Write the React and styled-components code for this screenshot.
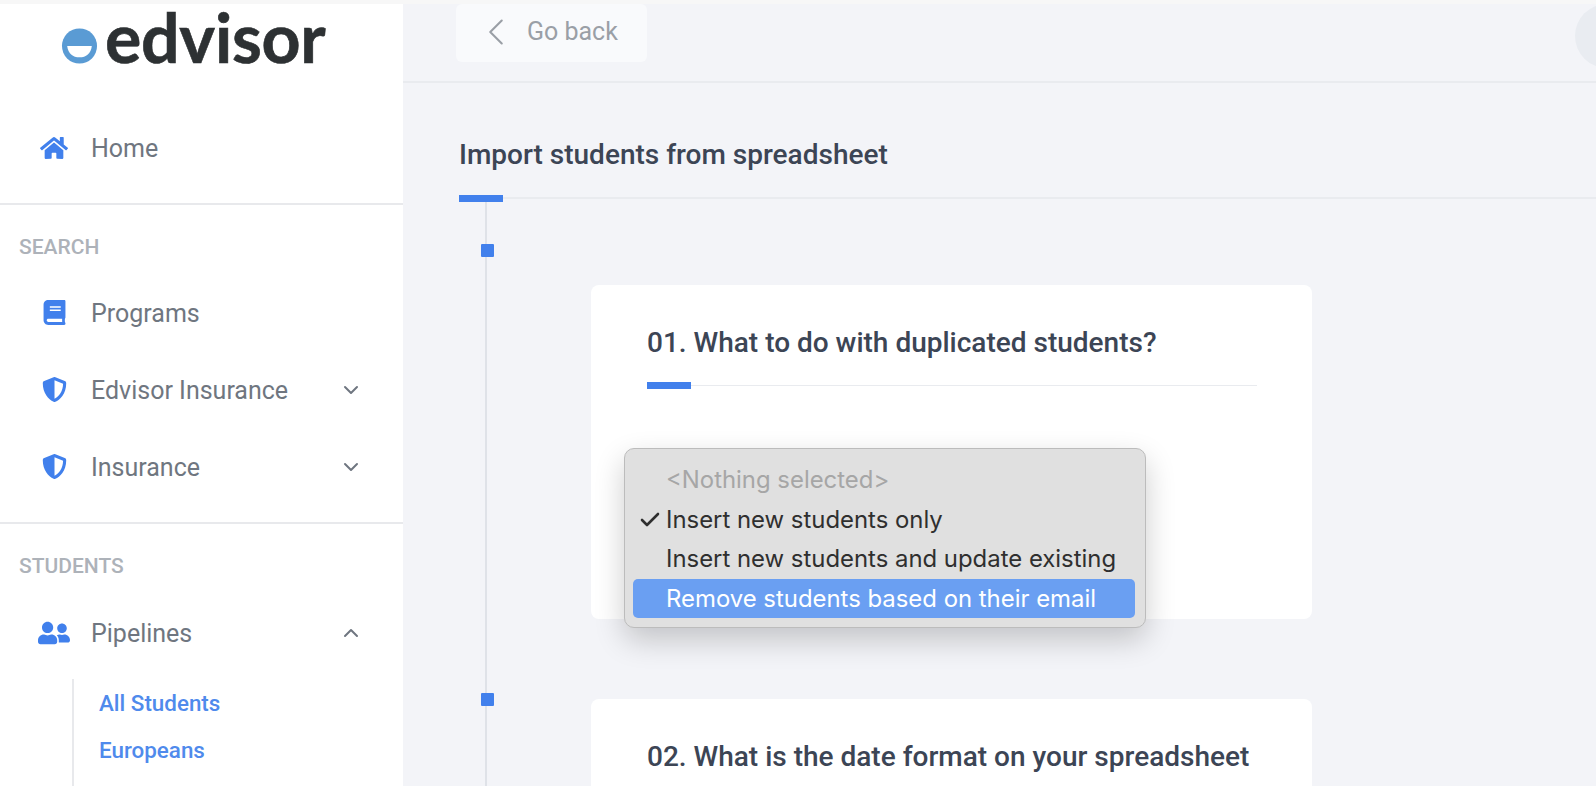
import { createGlobalStyle, styled } from 'styled-components';
import { FaHome, FaBook, FaShieldAlt, FaUserFriends } from 'react-icons/fa';
import { ChevronDown, ChevronUp, ChevronLeft, Check } from 'lucide-react';

const GlobalStyle = createGlobalStyle`
  html, body {
    margin: 0;
    padding: 0;
    overflow: hidden;
    background: #f3f4f8;
    font-family: Roboto, "Liberation Sans", sans-serif;
  }
  * { box-sizing: border-box; }
`;

const Page = styled.div`
  height: 786px;
  overflow: hidden;
  display: flex;
  flex-direction: column;
`;

const TopStrip = styled.div`
  height: 4px;
  flex: none;
  background: #f7f7f7;
`;

const Body = styled.div`
  flex: 1;
  min-height: 0;
  display: flex;
`;

const Sidebar = styled.aside`
  width: 403px;
  flex: none;
  background: #fff;
`;

const LogoBar = styled.div`
  height: 78px;
  padding: 2px 0 0 61px;
  display: flex;
  align-items: flex-start;
  gap: 7px;
`;

const LogoText = styled.span`
  font-family: Lato, sans-serif;
  font-weight: 700;
  font-size: 68px;
  line-height: 62px;
  letter-spacing: -0.3px;
  color: #2d3133;
  -webkit-text-stroke: 0.6px #2d3133;
`;

const LogoMark = styled.svg`
  width: 37px;
  height: 36px;
  flex: none;
  margin-top: 22px;
`;

const NavSection = styled.section`
  padding: ${(p) => p.$top}px 0 ${(p) => p.$bottom}px;
  border-bottom: ${(p) => (p.$plain ? 'none' : '2px solid #e8e9ec')};
`;

const SectionLabel = styled.div`
  height: 22px;
  margin: 0 0 ${(p) => p.$gap}px 19px;
  font-size: 21px;
  line-height: 22px;
  font-weight: 500;
  color: #adb2b9;
`;

const NavRow = styled.div`
  height: 77px;
  display: flex;
  align-items: center;
  padding: 0 40px 0 38px;
  font-size: 25px;
  color: #6f7680;
`;

const NavIcon = styled.span`
  width: 32px;
  margin-right: 21px;
  flex: none;
  display: flex;
  justify-content: center;
  color: #4180ec;
`;

const NavText = styled.span`
  flex: 1;
  padding-top: 2px;
`;

const SubNav = styled.div`
  margin: 8px 0 0 72px;
  padding-left: 25px;
  border-left: 2px solid #e8e9ec;
  height: 120px;
`;

const SubItem = styled.div`
  height: 47px;
  display: flex;
  align-items: center;
  font-size: 22.4px;
  font-weight: 500;
  color: #4f8aec;
`;

const Main = styled.main`
  flex: 1;
  min-width: 0;
  overflow: hidden;
`;

const Header = styled.header`
  height: 79px;
  padding-left: 53px;
  display: flex;
  justify-content: space-between;
  border-bottom: 2px solid #e9ebef;
`;

const BackButton = styled.div`
  width: 191px;
  height: 58px;
  padding-left: 17px;
  display: flex;
  align-items: center;
  gap: 8px;
  padding-bottom: 3px;
  background: #f9fafc;
  border-radius: 6px;
  font-size: 25px;
  color: #9a9fa6;
`;

const Avatar = styled.div`
  width: 64px;
  height: 64px;
  flex: none;
  margin-right: -43px;
  border-radius: 50%;
  background: #e9ecf1;
`;

const Content = styled.div`
  padding-left: 56px;
`;

const Heading = styled.div`
  position: relative;
  height: 116px;
  padding-top: 54px;
  font-size: 28px;
  line-height: 36px;
  font-weight: 500;
  color: #3c4555;
  border-bottom: 2px solid #e9ebef;
`;

const Accent = styled.span`
  position: absolute;
  left: 0;
  bottom: ${(p) => p.$bottom}px;
  width: 44px;
  height: 7px;
  background: #4180ec;
`;

const Timeline = styled.div`
  margin-left: 26px;
  padding-left: 104px;
  border-left: 2px solid #dfe2e8;
  height: 600px;
`;

const Step = styled.div`
  position: relative;
  padding-top: ${(p) => p.$top}px;
`;

const Marker = styled.span`
  position: absolute;
  left: -110px;
  top: ${(p) => p.$top}px;
  width: 13px;
  height: 13px;
  background: #4180ec;
  border-radius: 1px;
`;

const Card = styled.div`
  position: relative;
  width: 721px;
  height: ${(p) => p.$height}px;
  padding: 0 55px 0 56px;
  background: #fff;
  border-radius: 8px;
`;

const CardTitle = styled.div`
  position: relative;
  height: 101px;
  padding-top: 39px;
  font-size: 28px;
  line-height: 38px;
  font-weight: 500;
  color: #3c4555;
  border-bottom: 1px solid #e9ebef;
`;

const Menu = styled.div`
  position: absolute;
  left: 33px;
  top: 163px;
  width: 522px;
  height: 180px;
  padding: 11px 10px 11px 8px;
  background: #e0e0e0;
  border: 1px solid #bcbcbc;
  border-radius: 10px;
  box-shadow: 0 12px 30px rgba(0, 0, 0, 0.2);
  font-family: Inter, sans-serif;
  font-size: 23.9px;
`;

const MenuItem = styled.div`
  position: relative;
  height: 39.6px;
  padding-left: 33px;
  display: flex;
  align-items: center;
  border-radius: 5px;
  color: ${(p) => (p.$disabled ? '#a6a6a6' : p.$active ? '#fff' : '#2f2f2f')};
  background: ${(p) => (p.$active ? '#6a9ff2' : 'transparent')};
`;

const Tick = styled.span`
  position: absolute;
  left: 5px;
  top: 8px;
  display: flex;
`;

const NavEntry = ({ icon, label, chevron }) => (
  <NavRow>
    <NavIcon>{icon}</NavIcon>
    <NavText>{label}</NavText>
    {chevron}
  </NavRow>
);

const App = () => {
  return (
    <>
      <GlobalStyle />
      <Page>
        <TopStrip />
        <Body>
          <Sidebar>
            <LogoBar>
              <LogoMark viewBox="0 0 38 38">
                <circle cx="19" cy="19" r="18.5" fill="#5a9bd4" />
                <path d="M6 19 H32 C31 27 26 31 19 31 C12 31 7 27 6 19 Z" fill="#fff" />
              </LogoMark>
              <LogoText>edvisor</LogoText>
            </LogoBar>

            <NavSection $top={27} $bottom={17}>
              <NavEntry icon={<FaHome size={28} />} label="Home" />
            </NavSection>

            <NavSection $top={31} $bottom={17}>
              <SectionLabel $gap={16}>SEARCH</SectionLabel>
              <NavEntry icon={<FaBook size={25} />} label="Programs" />
              <NavEntry
                icon={<FaShieldAlt size={25} />}
                label="Edvisor Insurance"
                chevron={<ChevronDown size={24} strokeWidth={2} color="#6f7680" />}
              />
              <NavEntry
                icon={<FaShieldAlt size={25} />}
                label="Insurance"
                chevron={<ChevronDown size={24} strokeWidth={2} color="#6f7680" />}
              />
            </NavSection>

            <NavSection $top={31} $bottom={0} $plain>
              <SectionLabel $gap={17}>STUDENTS</SectionLabel>
              <NavEntry
                icon={<FaUserFriends size={32} />}
                label="Pipelines"
                chevron={<ChevronUp size={24} strokeWidth={2} color="#6f7680" />}
              />
              <SubNav>
                <SubItem>All Students</SubItem>
                <SubItem>Europeans</SubItem>
              </SubNav>
            </NavSection>
          </Sidebar>

          <Main>
            <Header>
              <BackButton>
                <ChevronLeft size={46} strokeWidth={1.1} />
                Go back
              </BackButton>
              <Avatar />
            </Header>
            <Content>
              <Heading>
                Import students from spreadsheet
                <Accent $bottom={-5} />
              </Heading>
              <Timeline>
                <Step $top={86}>
                  <Marker $top={45} />
                  <Card $height={334}>
                    <CardTitle>
                      01. What to do with duplicated students?
                      <Accent $bottom={-4} />
                    </CardTitle>
                    <Menu>
                      <MenuItem $disabled>&lt;Nothing selected&gt;</MenuItem>
                      <MenuItem>
                        <Tick>
                          <Check size={24} strokeWidth={2.6} />
                        </Tick>
                        Insert new students only
                      </MenuItem>
                      <MenuItem>Insert new students and update existing</MenuItem>
                      <MenuItem $active>Remove students based on their email</MenuItem>
                    </Menu>
                  </Card>
                </Step>
                <Step $top={80}>
                  <Marker $top={74} />
                  <Card $height={200}>
                    <CardTitle>02. What is the date format on your spreadsheet</CardTitle>
                  </Card>
                </Step>
              </Timeline>
            </Content>
          </Main>
        </Body>
      </Page>
    </>
  );
};

export default App;
